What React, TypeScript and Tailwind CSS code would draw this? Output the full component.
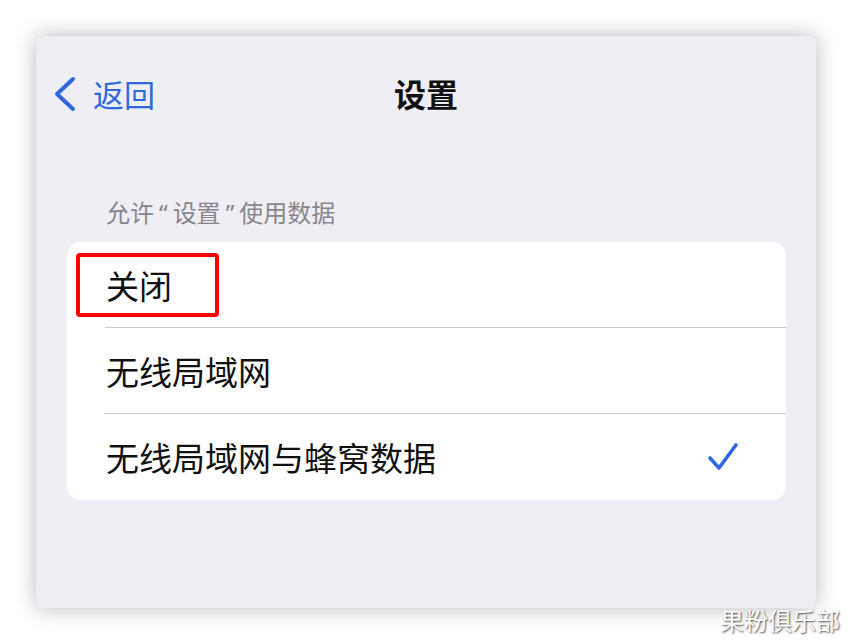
import React from "react";

const FONT = { fontFamily: '"Noto Sans CJK SC", "Noto Sans", sans-serif' };

function Row({ label, check, divider }: { label: string; check?: boolean; divider?: boolean }) {
  return (
    <div className="relative flex h-[86px] items-center pl-[39px] pr-[46px]">
      <span className="text-[33px] leading-none text-[#111111]">{label}</span>
      <div className="flex-1" />
      {check && (
        <svg width="34" height="32" viewBox="0 0 34 32" className="mt-[2px]">
          <path d="M4 16 L13 26 L30 3" fill="none" stroke="#2f68dd" strokeWidth="3.6" strokeLinecap="round" strokeLinejoin="round" />
        </svg>
      )}
      {divider && <div className="absolute bottom-0 left-[38px] right-0 h-px bg-[#c8c8cc]" />}
    </div>
  );
}

export default function App() {
  return (
    <div className="relative h-[644px] w-[852px] overflow-hidden bg-white pl-[36px] pt-[36px]" style={FONT}>
      <div className="flex h-[572px] w-[780px] flex-col rounded-[8px] bg-[#efeef4] shadow-[0_0_22px_rgba(0,0,0,0.28)]">
        <div className="grid h-[114px] grid-cols-[1fr_auto_1fr] items-center">
          <div className="flex items-center pl-[18px]">
            <svg width="24" height="36" viewBox="0 0 24 36" className="mt-[2px]">
              <path d="M19 3 L3 18 L19 33" fill="none" stroke="#2f68dd" strokeWidth="4" strokeLinecap="round" strokeLinejoin="round" />
            </svg>
            <span className="ml-[15px] text-[31px] leading-none text-[#2f68dd]">返回</span>
          </div>
          <span className="text-[32px] font-bold leading-none text-[#111111]">设置</span>
          <div />
        </div>
        <div className="mt-[50px] h-[24px] pl-[70px] text-[24px] leading-none text-[#86868b]">
          允许<span className="px-[5px] font-['Noto_Sans']">“</span>设置<span className="px-[5px] font-['Noto_Sans']">”</span>使用数据
        </div>
        <div className="relative ml-[31px] mr-[30px] mt-[18px] rounded-[14px] bg-white">
          <Row label="关闭" divider />
          <Row label="无线局域网" divider />
          <Row label="无线局域网与蜂窝数据" check />
          <div className="absolute left-[9px] top-[11px] h-[64px] w-[143px] rounded-[4px] border-[4px] border-[#ff0000]" />
        </div>
      </div>
      <div className="absolute bottom-[12px] right-[12px] text-[24px] leading-none text-white [text-shadow:1px_1px_2px_rgba(0,0,0,0.7)]">
        果粉俱乐部
      </div>
    </div>
  );
}
